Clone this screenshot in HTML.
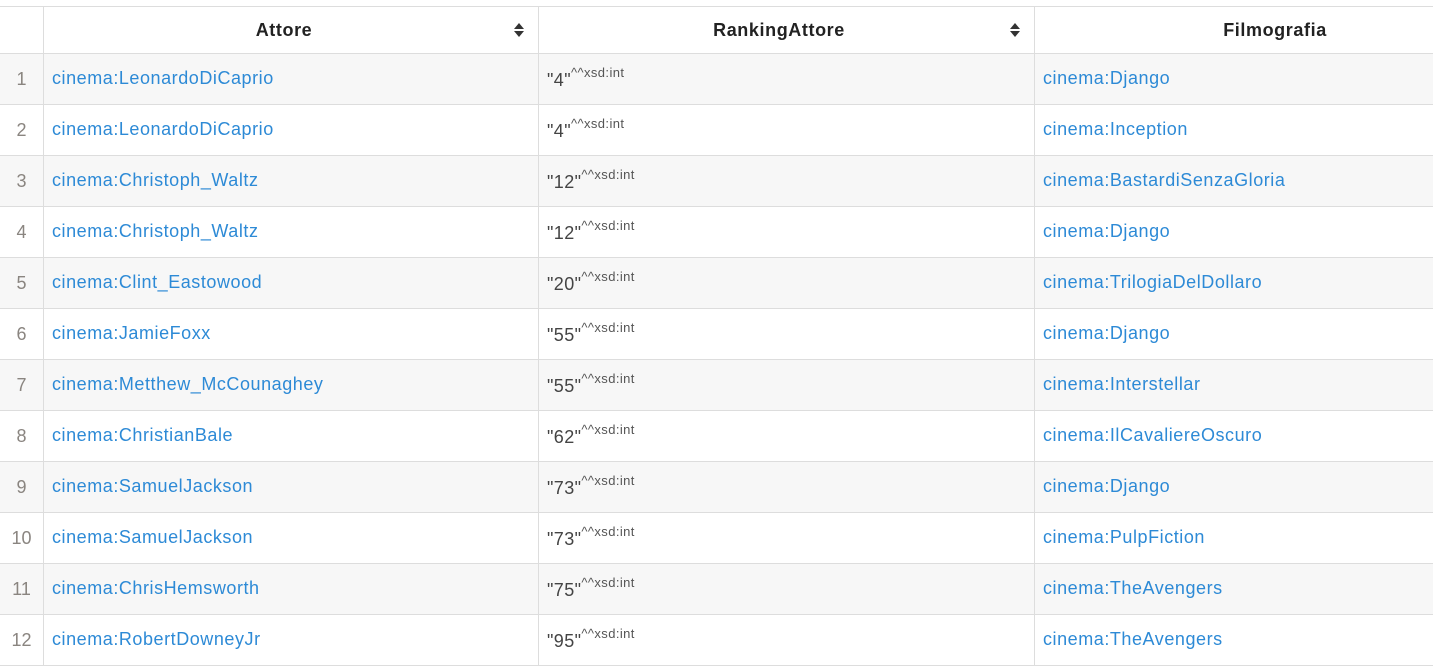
<!DOCTYPE html>
<html><head><meta charset="utf-8"><style>
*{margin:0;padding:0;box-sizing:border-box}
body{width:1433px;height:661px;overflow:hidden;background:#fff;font-family:"Liberation Sans",sans-serif;position:relative}
.row{position:absolute;left:0;width:1433px;height:51px;border-bottom:1px solid #ddd}
.c{position:absolute;top:0;height:100%;border-left:1px solid #ddd}
.idx{position:absolute;left:0;width:43px;text-align:center;color:#8a8580;font-size:18px;top:15px}
.a{left:43px;width:495px}.r{left:538px;width:496px}.f{left:1034px;width:400px}
.t{position:absolute;left:8px;top:14px;font-size:18px;color:#2d8ad6;white-space:nowrap;letter-spacing:0.55px}
.n{position:absolute;left:8px;top:13px;font-size:18px;color:#444;white-space:nowrap;letter-spacing:0.4px}
.n sup{font-size:13px;color:#555;position:relative;top:-2px}
.h{font-weight:bold;color:#222;font-size:18px;position:absolute;top:13px;width:100%;text-align:center;letter-spacing:0.6px}
.s{position:absolute;right:14px;top:15px;width:10px;height:16px}
</style></head><body>
<div class="row" style="top:6px;height:48px;border-top:1px solid #ddd">
<div class="c a"><div class="h" style="width:480px">Attore</div><svg class="s" viewBox="0 0 10 16"><path d="M0 7 L5 1 L10 7Z M0 9 L5 15 L10 9Z" fill="#333"/></svg></div>
<div class="c r"><div class="h" style="width:480px">RankingAttore</div><svg class="s" viewBox="0 0 10 16"><path d="M0 7 L5 1 L10 7Z M0 9 L5 15 L10 9Z" fill="#333"/></svg></div>
<div class="c f"><div class="h" style="width:480px">Filmografia</div></div>
</div>
<div id="rows"></div>
<script>
var d=[["LeonardoDiCaprio","4","Django"],["LeonardoDiCaprio","4","Inception"],["Christoph_Waltz","12","BastardiSenzaGloria"],["Christoph_Waltz","12","Django"],["Clint_Eastowood","20","TrilogiaDelDollaro"],["JamieFoxx","55","Django"],["Metthew_McCounaghey","55","Interstellar"],["ChristianBale","62","IlCavaliereOscuro"],["SamuelJackson","73","Django"],["SamuelJackson","73","PulpFiction"],["ChrisHemsworth","75","TheAvengers"],["RobertDowneyJr","95","TheAvengers"]];
var h="";d.forEach(function(x,i){h+='<div class="row" style="top:'+(54+i*51)+'px;background:'+(i%2==0?'#f7f7f7':'#fff')+'"><div class="idx">'+(i+1)+'</div><div class="c a"><span class="t">cinema:'+x[0]+'</span></div><div class="c r"><span class="n">"'+x[1]+'"<sup>^^xsd:int</sup></span></div><div class="c f"><span class="t">cinema:'+x[2]+'</span></div></div>';});
document.getElementById("rows").innerHTML=h;
</script>
</body></html>
